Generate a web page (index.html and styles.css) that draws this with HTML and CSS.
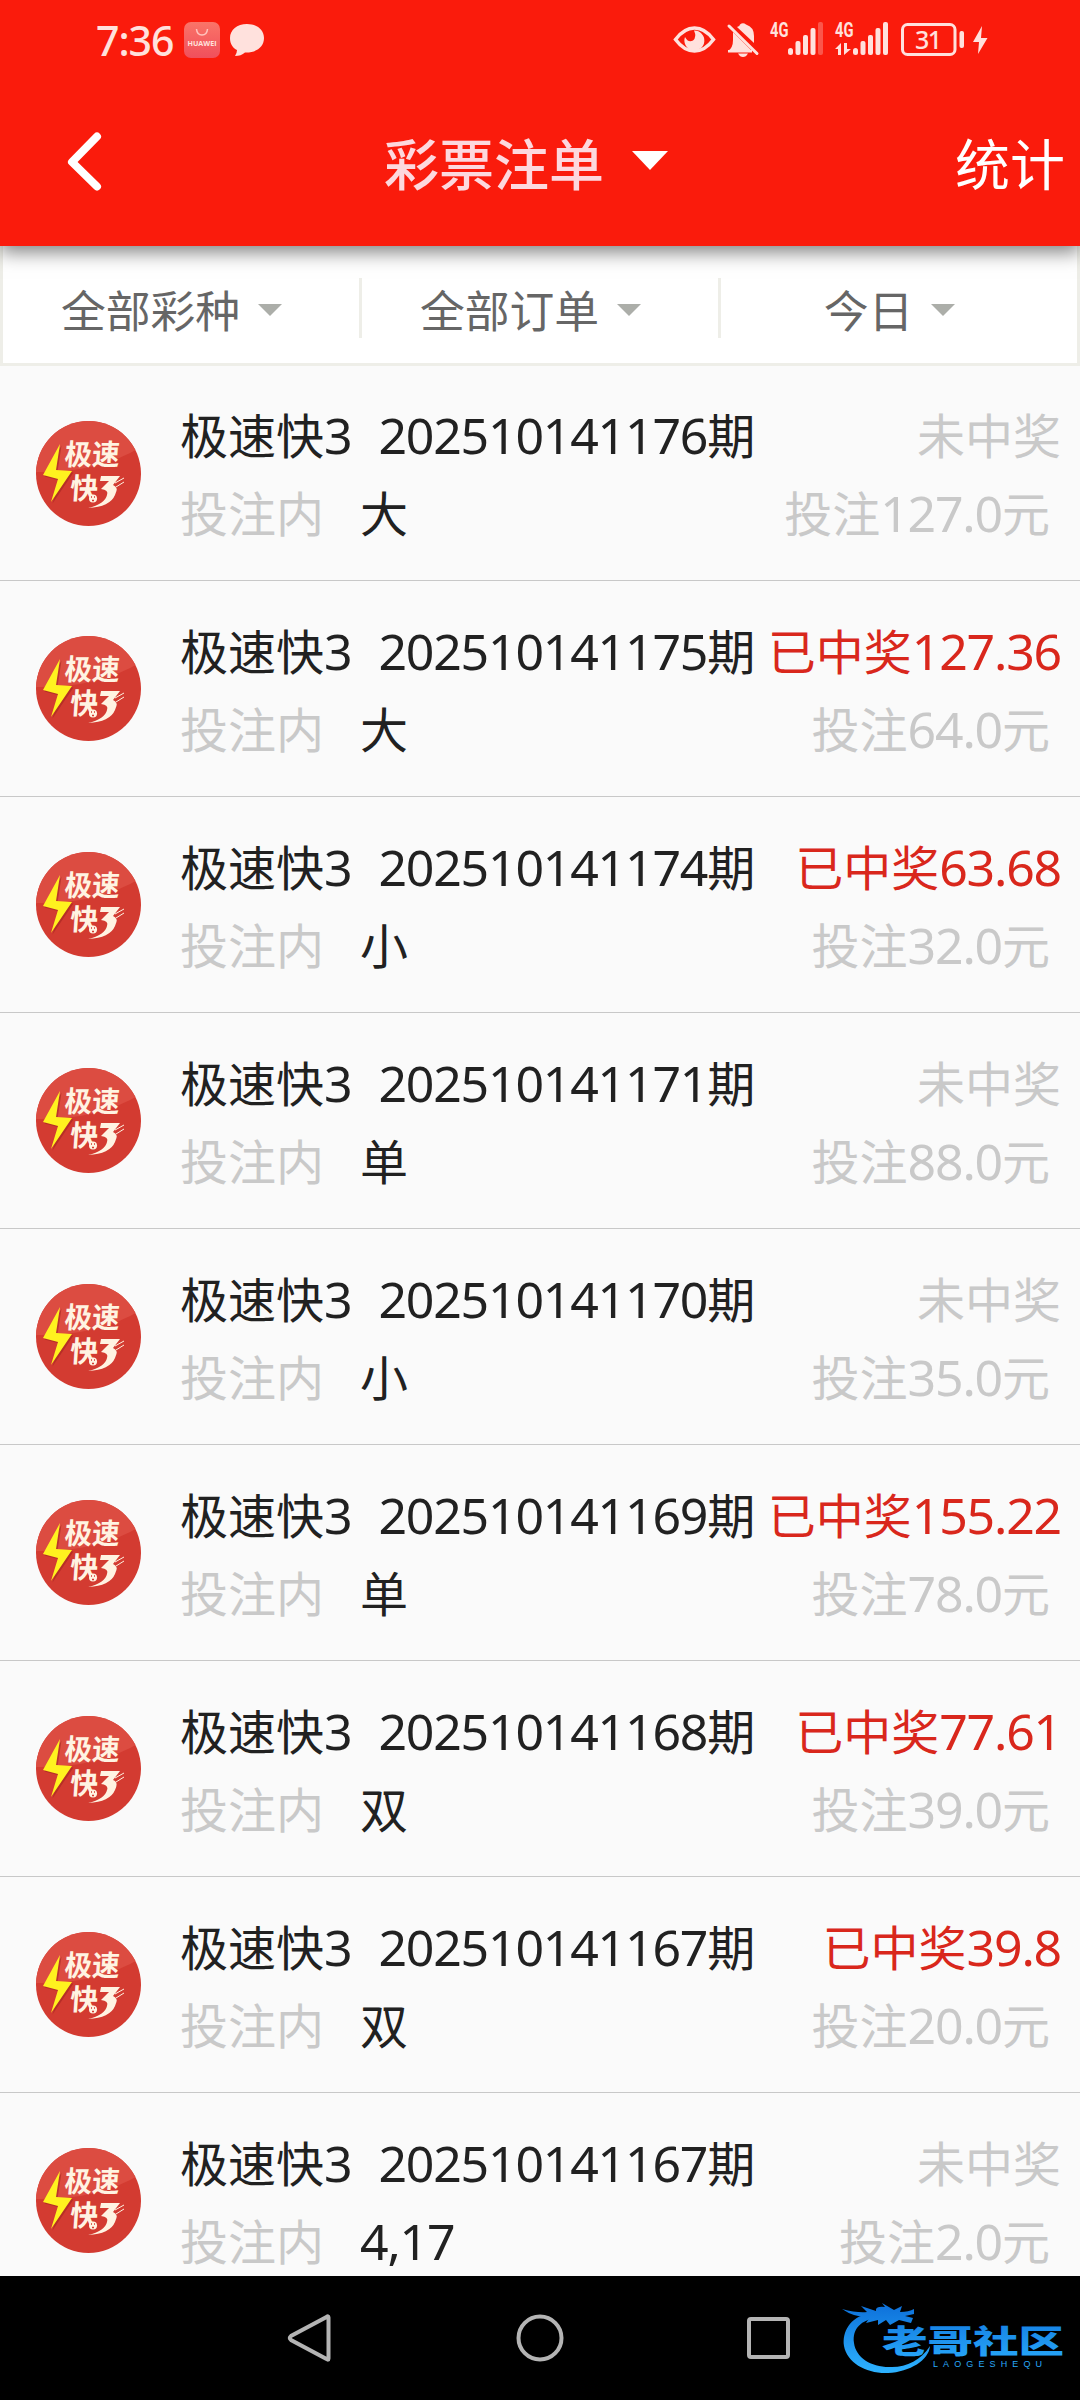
FILE: index.html
```html
<!DOCTYPE html>
<html lang="zh-CN">
<head>
  <meta charset="UTF-8" />
  <meta name="viewport" content="width=device-width, initial-scale=1" />
  <title>彩票注单</title>
  <link rel="stylesheet" href="styles.css">
</head>
<body>
  <!-- shared lottery logo -->
  <svg class="defs" width="0" height="0">
    <defs>
      <clipPath id="disc"><circle cx="52.5" cy="52.5" r="52.5"/></clipPath>
    </defs>
    <symbol id="logo" viewBox="0 0 105 105" overflow="visible">
      <g clip-path="url(#disc)">
        <rect width="105" height="105" fill="#d33b31"/>
        <path d="M0 0H105V26Q62 52 0 51Z" fill="#dc4c41"/>
      </g>
      <g transform="translate(1.5 1.5)" fill="#a3271f" opacity=".6">
        <path d="M24 23L7 54L22 58L15 81L36 50L20 49Z"/>
      </g>
      <path d="M24 23L7 54L22 58L15 81L36 50L20 49Z" fill="#fff21f"/>
      <g class="logo-text" transform="skewX(-4)">
        <text x="31" y="44.500" textLength="55" lengthAdjust="spacingAndGlyphs">极速</text>
        <text x="39" y="78" textLength="28" lengthAdjust="spacingAndGlyphs">快</text>
      </g>
      <path d="M65 55H84L77 64Q83 66 79 74Q74 86 52 87Q69 83 71 74Q73 69 65 68L73 60H64Z" fill="#fff3e2"/>
      <path d="M79 62L88 57M80 66L88 61" stroke="#fff3e2" stroke-width="1"/>
      <circle cx="57" cy="77.500" r="4" fill="#fff3e2"/>
      <path d="M55 76h1M58 76h1M56 79.500h2" stroke="#d33b31" stroke-width="1.500"/>
    </symbol>
  </svg>

  <div class="phone">
    <header>
      <div class="status">
        <span class="time">7:36</span>
        <svg class="huawei" width="36" height="36" viewBox="0 0 36 36">
          <defs>
            <linearGradient id="hw" x1="0" y1="0" x2="0" y2="1">
              <stop offset="0" stop-color="#fa7468"/>
              <stop offset="1" stop-color="#f04f5c"/>
            </linearGradient>
          </defs>
          <rect width="36" height="36" rx="7" fill="url(#hw)"/>
          <path d="M12.500 7Q13 13 18 13T23.500 7" fill="none" stroke="#ffc4be" stroke-width="1.500"/>
          <text x="3.500" y="24" textLength="29" lengthAdjust="spacingAndGlyphs">HUAWEI</text>
        </svg>
        <svg class="bubble" width="34" height="33" viewBox="0 0 34 33">
          <path d="M17 0C7 0 0 6 0 14C0 20 3 24 7 26Q7 29 5 32Q11 32 15 28.500C26 29 34 23 34 14C34 6 27 0 17 0Z"/>
        </svg>
        <!-- eye, muted bell, two signals, battery, charging bolt -->
        <svg class="indicators" width="315" height="40" viewBox="673 20 315 40">
          <path d="M675.500 39.500Q684 28 694.500 28T713.500 39.500Q705 51 694.500 51T675.500 39.500Z" fill="none" stroke="#ffe1dd" stroke-width="3.500"/>
          <path d="M694 30.500A10 10 0 1 1 685 37Q688 43 693 40.500Q697 37 694 30.500Z"/>
          <path d="M728 51Q733 48 733 40V32L751 50ZM737 27Q740 26 740 24.500Q743 22 746 24.500Q754 27 754 36V43Z"/>
          <path d="M738 53.500H748Q746 57 743 57T738 53.500Z"/>
          <path d="M729 26L757 53.500" stroke="#ffe1dd" stroke-width="3" stroke-linecap="round"/>
          <path d="M728 50H752V52.500H728Z"/>
          <text class="net" x="770" y="37" textLength="18.500" lengthAdjust="spacingAndGlyphs">4G</text>
          <g>
            <rect x="788" y="48" width="5" height="7" rx="2.500"/>
            <rect x="795.500" y="41" width="5" height="14" rx="2"/>
            <rect x="803" y="35" width="5" height="20" rx="2"/>
            <rect x="810.500" y="28" width="5" height="27" rx="2"/>
            <rect x="818" y="22" width="5" height="33" rx="2" opacity=".3"/>
          </g>
          <text class="net" x="835" y="37" textLength="18.500" lengthAdjust="spacingAndGlyphs">4G</text>
          <path d="M835 49L841 43V55H838V49ZM844 43H847V49H851L844 55Z"/>
          <g>
            <rect x="853" y="48" width="5" height="7" rx="2.500"/>
            <rect x="860.500" y="41" width="5" height="14" rx="2"/>
            <rect x="868" y="35" width="5" height="20" rx="2"/>
            <rect x="875.500" y="28" width="5" height="27" rx="2"/>
            <rect x="883" y="22" width="5" height="33" rx="2"/>
          </g>
          <rect x="902.500" y="24.500" width="52.500" height="30" rx="5" fill="none" stroke="#ffe1dd" stroke-width="3"/>
          <text class="level" x="915" y="49">31</text>
          <rect x="959.500" y="31" width="4.500" height="17" rx="2"/>
          <path d="M982 26L973 42H979L978 54L987.500 38H981Z"/>
        </svg>
      </div>
      <div class="titlebar">
        <svg class="back" width="36" height="60" viewBox="0 0 36 60">
          <path d="M30 5.500L5 31L30 55.500"/>
        </svg>
        <div class="title">彩票注单<i class="caret"></i></div>
        <div class="stats">统计</div>
      </div>
    </header>

    <div class="filters">
      <div class="filter">全部彩种<i class="caret"></i></div>
      <div class="filter">全部订单<i class="caret"></i></div>
      <div class="filter">今日<i class="caret"></i></div>
    </div>

    <div class="list" id="list"></div>

    <footer>
      <div class="nav">
        <svg width="48" height="50" viewBox="0 0 48 50">
          <path d="M41.500 4.500V45.500Q41.500 47.500 39.500 46L4 27Q1.500 25 4 23L39.500 4Q41.500 2.500 41.500 4.500Z"/>
        </svg>
        <svg width="48" height="50" viewBox="0 0 48 50">
          <circle cx="24" cy="25" r="21.500"/>
        </svg>
        <svg width="48" height="50" viewBox="0 0 48 50">
          <rect x="4" y="6" width="39" height="38" rx="2"/>
        </svg>
      </div>
      <svg class="brand" width="230" height="76" viewBox="840 2302 230 76">
        <defs>
          <linearGradient id="blue" gradientUnits="userSpaceOnUse" x1="0" y1="2308" x2="0" y2="2372">
            <stop offset="0" stop-color="#0f74dc"/>
            <stop offset="1" stop-color="#2db2ff"/>
          </linearGradient>
        </defs>
        <g fill="url(#blue)">
          <path d="M868 2314C850 2317 842 2332 844 2346C847 2363 867 2374 888 2373C910 2372 929 2360 930 2346C921 2360 907 2367 892 2367C872 2368 856 2358 854 2343C852 2328 862 2320 876 2318Z"/>
          <path d="M842 2309Q857 2313 867 2312L861 2306L876 2311Q875 2306 885 2307L882 2303L894 2310L902 2306L900 2312Q909 2312 914 2309V2314L905 2316L913 2318L911 2323L899 2320L890 2325L886 2320L878 2325V2320L866 2323L870 2317Q855 2318 842 2309Z"/>
          <text class="brand-name" x="882" y="2353" textLength="182" lengthAdjust="spacingAndGlyphs">老哥社区</text>
          <text class="brand-sub" x="933" y="2367" textLength="109">LAOGESHEQU</text>
        </g>
      </svg>
    </footer>
  </div>

<script>
  const orders = [
    { issue: "202510141176", pick: "大", win: "", bet: "127.0" },
    { issue: "202510141175", pick: "大", win: "127.36", bet: "64.0" },
    { issue: "202510141174", pick: "小", win: "63.68", bet: "32.0" },
    { issue: "202510141171", pick: "单", win: "", bet: "88.0" },
    { issue: "202510141170", pick: "小", win: "", bet: "35.0" },
    { issue: "202510141169", pick: "单", win: "155.22", bet: "78.0" },
    { issue: "202510141168", pick: "双", win: "77.61", bet: "39.0" },
    { issue: "202510141167", pick: "双", win: "39.8", bet: "20.0" },
    { issue: "202510141167", pick: "4,17", win: "", bet: "2.0" }
  ];

  // digits get their own font size and spacing
  const num = (text) => text.replace(/[\d.,]+/g, '<span class="num">$&</span>');

  document.getElementById('list').innerHTML = orders.map((o) => `
    <div class="order">
      <svg class="logo" width="105" height="105"><use href="#logo"/></svg>
      <div class="info">
        <div class="line">
          <span class="name">${num('极速快3')}<span class="issue">${num(o.issue + '期')}</span></span>
          <span class="${o.win ? 'won' : 'muted'}">${num(o.win ? '已中奖' + o.win : '未中奖')}</span>
        </div>
        <div class="line">
          <span class="muted label">投注内</span>
          <span class="pick">${num(o.pick)}</span>
          <span class="muted bet">${num('投注' + o.bet + '元')}</span>
        </div>
      </div>
    </div>`).join('');
</script>
</body>
</html>
```
FILE: styles.css
```css
body {
  margin: 0;
  background: #000;
  font-family: "Noto Sans CJK SC", sans-serif;
}
.defs {
  position: absolute;
}
.phone {
  width: 1080px;
  height: 2400px;
  display: flex;
  flex-direction: column;
  overflow: hidden;
  background: #fafafa;
}
header {
  height: 246px;
  flex: none;
  background: #fa1b0c;
  box-shadow: 0 6px 18px rgba(0,0,0,0.5);
  position: relative;
  z-index: 1;
}
.status {
  display: flex;
  align-items: center;
  height: 80px;
  padding: 0 92px 0 96px;
  color: #ffe1dd;
  fill: #ffe1dd;
}
.time {
  width: 88px;
  font-family: "Noto Sans", sans-serif;
  font-size: 41px;
  font-weight: 500;
  letter-spacing: -1px;
}
.huawei text {
  font: 700 7px "Open Sans", sans-serif;
  fill: #ffe1dd;
}
.bubble {
  margin-left: 10px;
}
.indicators {
  margin-left: auto;
  overflow: visible;
}
.net {
  font: 700 20px "Roboto", sans-serif;
}
.level {
  font: 500 25px "Noto Sans", sans-serif;
  letter-spacing: -1.5px;
}
.titlebar {
  display: flex;
  align-items: center;
  height: 161px;
  padding: 0 15px 0 67px;
  font-size: 55px;
  line-height: 80px;
  color: #fff;
}
.back {
  fill: none;
  stroke: #fff;
  stroke-width: 8;
  stroke-linecap: round;
  stroke-linejoin: round;
}
.title {
  display: flex;
  align-items: center;
  gap: 28px;
  margin-left: 281px;
  font-weight: 500;
  color: #fdd8de;
}
.stats {
  margin-left: auto;
}
.title .caret {
  border-width: 19px 18px 0;
  border-color: #fff transparent;
}
.caret {
  width: 0;
  height: 0;
  border-style: solid;
}
.filters {
  display: flex;
  flex: none;
  box-sizing: border-box;
  height: 120px;
  padding: 32px 0 25px;
  border: 3px solid #eeeee8;
  border-top: 0;
  background: #fff;
}
.filter {
  flex: 1;
  display: flex;
  align-items: center;
  justify-content: center;
  gap: 18px;
  padding-right: 19px;
  font-size: 44.800px;
  color: #666;
  border-right: 3px solid #eeeee8;
}
.filter:last-child {
  border-right: 0;
}
.filter .caret {
  margin-top: 3px;
  border-width: 12px 12px 0;
  border-color: #acaea9 transparent;
}
.list {
  flex: 1;
  min-height: 0;
  overflow: hidden;
}
.order {
  display: flex;
  align-items: center;
  box-sizing: border-box;
  height: 216px;
  padding-left: 36px;
  border-bottom: 1px solid #c8c8c8;
}
.order:first-child {
  height: 215px;
}
.logo-text {
  font: 700 29px "Noto Sans CJK SC", sans-serif;
  fill: #fff3e2;
}
.info {
  flex: 1;
  margin: -2px 0 0 39px;
}
.line {
  display: flex;
  height: 78px;
  line-height: 78px;
  padding-right: 19px;
  font-size: 48px;
  color: #212121;
  white-space: nowrap;
}
.line > :last-child {
  margin-left: auto;
}
.num {
  font-family: "Noto Sans", sans-serif;
  font-size: 50px;
  line-height: 1;
  letter-spacing: -1.200px;
}
.issue {
  margin-left: 27px;
}
.label {
  width: 180px;
}
.muted {
  color: #c9c9c9;
}
.won {
  color: #d9271c;
}
.bet {
  padding-right: 11px;
}
footer {
  position: relative;
  flex: none;
  height: 124px;
  background: #000;
}
.nav {
  display: flex;
  align-items: center;
  justify-content: center;
  gap: 181px;
  height: 124px;
  fill: none;
  stroke: #b4b4b4;
  stroke-width: 4;
}
/* brand mark lies over the navigation bar */
.brand {
  position: absolute;
  right: 10px;
  bottom: 22px;
}
.brand-name {
  font: 900 32px "Noto Sans CJK SC", sans-serif;
}
.brand-sub {
  font: 9px "Liberation Sans", sans-serif;
}
```
